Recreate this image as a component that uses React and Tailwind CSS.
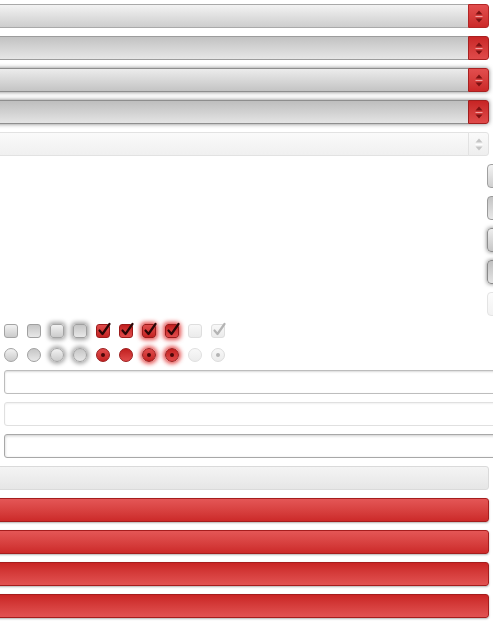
const Arrows = ({ disabled }) => {
  const fill = disabled ? "#c4c4c4" : "#7d1212";
  const line = disabled ? "#ffffff" : "#f1a0a0";
  return (
    <svg width="8" height="13" viewBox="0 0 8 13">
      <path d="M4 0.5 L7.5 4.5 L0.5 4.5 Z" fill={fill} />
      <rect x="0.5" y="6" width="7" height="1" fill={line} />
      <path d="M0.5 8.5 L7.5 8.5 L4 12.5 Z" fill={fill} />
    </svg>
  );
};

const selects = [
  {
    body: "border-[#a9a9a9] bg-linear-to-b from-[#f3f3f3] to-[#cdcdcd]",
    box: "border-[#b32525] bg-linear-to-b from-[#e24e4e] to-[#cb2828]",
    glow: "",
  },
  {
    body: "border-[#9c9c9c] bg-linear-to-b from-[#c2c2c2] to-[#e6e6e6]",
    box: "border-[#a82020] bg-linear-to-b from-[#c92626] to-[#e04a4a]",
    glow: "",
  },
  {
    body: "border-[#8e8e8e] bg-linear-to-b from-[#ececec] to-[#c4c4c4]",
    box: "border-[#a82020] bg-linear-to-b from-[#e24e4e] to-[#cb2828]",
    glow: "shadow-[0_0_4px_rgba(0,0,0,0.5)]",
  },
  {
    body: "border-[#8e8e8e] bg-linear-to-b from-[#bebebe] to-[#e4e4e4]",
    box: "border-[#a01e1e] bg-linear-to-b from-[#c72424] to-[#e04a4a]",
    glow: "shadow-[0_0_4px_rgba(0,0,0,0.5)]",
  },
  {
    body: "border-[#e2e2e2] bg-linear-to-b from-[#fafafa] to-[#f0f0f0]",
    box: "border-[#e2e2e2] bg-linear-to-b from-[#fafafa] to-[#eeeeee]",
    glow: "",
    disabled: true,
  },
];

const sideButtons = [
  "border-[#a0a0a0] bg-linear-to-b from-[#f3f3f3] to-[#cfcfcf]",
  "border-[#9a9a9a] bg-linear-to-b from-[#c4c4c4] to-[#e8e8e8]",
  "border-[#8e8e8e] bg-linear-to-b from-[#eeeeee] to-[#c6c6c6] shadow-[0_0_4px_rgba(0,0,0,0.5)]",
  "border-[#8a8a8a] bg-linear-to-b from-[#c0c0c0] to-[#e4e4e4] shadow-[0_0_4px_rgba(0,0,0,0.5)]",
  "border-[#e4e4e4] bg-linear-to-b from-[#fcfcfc] to-[#f2f2f2]",
];

const grayOn = "border-[#a4a4a4] bg-linear-to-b from-[#f2f2f2] to-[#cbcbcb]";
const grayDown = "border-[#a0a0a0] bg-linear-to-b from-[#c6c6c6] to-[#e8e8e8]";
const redOn = "border-[#9c1b1b] bg-linear-to-b from-[#e04c4c] to-[#c42222]";
const redDown = "border-[#9c1b1b] bg-linear-to-b from-[#c21f1f] to-[#e04a4a]";

const checks = [
  { cls: grayOn, mark: null },
  { cls: grayDown, mark: null },
  { cls: grayOn + " shadow-[0_0_4px_2px_rgba(0,0,0,0.35)]", mark: null },
  { cls: grayDown + " shadow-[0_0_4px_2px_rgba(0,0,0,0.35)]", mark: null },
  { cls: redOn, mark: "#2b0606" },
  { cls: redDown, mark: "#2b0606" },
  { cls: redOn + " shadow-[0_0_4px_2px_rgba(220,20,20,0.75)]", mark: "#2b0606" },
  { cls: redDown + " shadow-[0_0_4px_2px_rgba(220,20,20,0.75)]", mark: "#2b0606" },
  { cls: "border-[#dedede] bg-linear-to-b from-[#f8f8f8] to-[#ebebeb]", mark: null },
  { cls: "border-[#dedede] bg-linear-to-b from-[#f8f8f8] to-[#ebebeb]", mark: "#b4b4b4" },
];

const radios = [
  { cls: grayOn, dot: null },
  { cls: grayDown, dot: null },
  { cls: grayOn + " shadow-[0_0_4px_2px_rgba(0,0,0,0.35)]", dot: null },
  { cls: grayDown + " shadow-[0_0_4px_2px_rgba(0,0,0,0.35)]", dot: null },
  { cls: redOn, dot: "bg-[#4a0808]" },
  { cls: redDown, dot: null },
  { cls: redOn + " shadow-[0_0_4px_2px_rgba(220,20,20,0.75)]", dot: "bg-[#4a0808]" },
  { cls: redDown + " shadow-[0_0_4px_2px_rgba(220,20,20,0.75)]", dot: "bg-[#4a0808]" },
  { cls: "border-[#e0e0e0] bg-linear-to-b from-[#f8f8f8] to-[#ececec]", dot: null },
  { cls: "border-[#dcdcdc] bg-linear-to-b from-[#f8f8f8] to-[#ececec]", dot: "bg-[#b4b4b4]" },
];

const inputs = [
  "border-[#bdbdbd] shadow-[inset_0_1px_2px_rgba(0,0,0,0.15)]",
  "border-[#e0e0e0] shadow-[inset_0_1px_2px_rgba(0,0,0,0.06)]",
  "border-[#a8a8a8] shadow-[inset_0_1px_3px_rgba(0,0,0,0.2)]",
];

const redBars = [
  "border-[#a51d1d] bg-linear-to-b from-[#e45656] to-[#cc2929]",
  "border-[#a51d1d] bg-linear-to-b from-[#e45656] to-[#cc2929]",
  "border-[#a51d1d] bg-linear-to-b from-[#c92424] to-[#e25252]",
  "border-[#a51d1d] bg-linear-to-b from-[#c92424] to-[#e25252]",
];

export default function App() {
  return (
    <div className="w-[493px] h-[625px] overflow-hidden bg-white">
      <div className="flex flex-col pt-1">
        {/* selects */}
        {selects.map((s, i) => (
          <div key={i} className={`flex h-6 -ml-2 mr-1 mb-2 rounded-[3px] ${s.glow}`}>
            <div className={`flex-1 border rounded-l-[3px] ${s.body}`} />
            <div
              className={`w-[21px] -ml-px flex items-center justify-center border rounded-r-[3px] ${s.box}`}
            >
              <Arrows disabled={s.disabled} />
            </div>
          </div>
        ))}

        {/* buttons cut off at the right edge */}
        {sideButtons.map((c, i) => (
          <div
            key={i}
            className={`self-end w-[30px] h-6 -mr-6 mb-2 border rounded-[4px] ${c}`}
          />
        ))}

        {/* checkboxes */}
        <div className="flex gap-[9px] pl-1 h-6">
          {checks.map((c, i) => (
            <div key={i} className={`relative w-[14px] h-[14px] border rounded-[3px] ${c.cls}`}>
              {c.mark && (
                <svg
                  className="absolute -top-[3px] -left-px overflow-visible"
                  width="16"
                  height="16"
                  viewBox="0 0 16 16"
                >
                  <path
                    d="M3.5 8.5 L6.5 12 L13.5 2"
                    fill="none"
                    stroke={c.mark}
                    strokeWidth="2.2"
                    strokeLinecap="round"
                    strokeLinejoin="round"
                  />
                </svg>
              )}
            </div>
          ))}
        </div>

        {/* radios */}
        <div className="flex gap-[9px] pl-1 h-[22px]">
          {radios.map((r, i) => (
            <div
              key={i}
              className={`w-[14px] h-[14px] border rounded-full flex items-center justify-center ${r.cls}`}
            >
              {r.dot && <div className={`w-1 h-1 rounded-full ${r.dot}`} />}
            </div>
          ))}
        </div>

        {/* text inputs */}
        {inputs.map((c, i) => (
          <div key={i} className={`h-6 ml-1 -mr-4 mb-2 bg-white border rounded-[3px] ${c}`} />
        ))}

        {/* disabled button */}
        <div className="h-6 -ml-2 mr-1 mb-2 border border-[#dadada] rounded-[3px] bg-linear-to-b from-[#f4f4f4] to-[#e6e6e6]" />

        {/* red buttons */}
        {redBars.map((c, i) => (
          <div
            key={i}
            className={`h-6 -ml-2 mr-1 mb-2 border rounded-[3px] shadow-[0_1px_2px_rgba(0,0,0,0.3)] ${c}`}
          />
        ))}
      </div>
    </div>
  );
}
